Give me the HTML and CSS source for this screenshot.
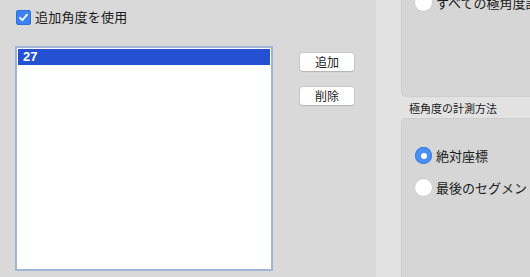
FILE: index.html
```html
<!DOCTYPE html>
<html lang="ja">
<head>
<meta charset="utf-8">
<link rel="stylesheet" href="styles.css">
</head>
<body>
<div class="page">
  <div class="left">
    <label class="check-row">
      <span class="checkbox">
        <svg width="11" height="11" viewBox="0 0 11 11"><path d="M2 5.8 L4.4 8.2 L9 2.6" fill="none" stroke="#fff" stroke-width="1.8" stroke-linecap="round" stroke-linejoin="round"/></svg>
      </span>
      <span class="check-label">追加角度を使用</span>
    </label>
    <div class="list-area">
      <div class="listbox">
        <div class="row selected">27</div>
      </div>
      <div class="buttons">
        <button class="btn">追加</button>
        <button class="btn">削除</button>
      </div>
    </div>
  </div>
  <div class="strip"></div>
  <div class="right">
    <div class="group top-group">
      <div class="radio-row">
        <span class="radio"></span>
        <span class="radio-label">すべての極角度計測</span>
      </div>
    </div>
    <div class="group-title">極角度の計測方法</div>
    <div class="group bottom-group">
      <div class="radio-row">
        <span class="radio on"><span class="dot"></span></span>
        <span class="radio-label">絶対座標</span>
      </div>
      <div class="radio-row">
        <span class="radio"></span>
        <span class="radio-label">最後のセグメントに対する相対</span>
      </div>
    </div>
  </div>
</div>
</body>
</html>
```
FILE: styles.css
```css
* { box-sizing: border-box; }
html, body {
  margin: 0;
  padding: 0;
  width: 530px;
  height: 277px;
  overflow: hidden;
  background: #d9d9d9;
  font-family: "Noto Sans CJK JP", "Noto Sans", sans-serif;
  color: #1a1a1a;
}
.page {
  display: flex;
  height: 277px;
}
.left {
  width: 376px;
  flex: none;
  background: #d9d9d9;
  padding: 9px 0 0 16px;
}
.check-row {
  display: flex;
  align-items: center;
  gap: 4px;
  height: 16px;
}
.checkbox {
  width: 15px;
  height: 15px;
  border-radius: 3px;
  background: #3d82f0;
  display: flex;
  align-items: center;
  justify-content: center;
  box-shadow: inset 0 0 0 1px #2f6fd8;
}
.check-label {
  font-size: 13px;
  line-height: 16px;
  letter-spacing: 0.2px;
}
.list-area {
  display: flex;
  margin-top: 21px;
  margin-left: -1px;
}
.listbox {
  width: 258px;
  height: 225px;
  background: #fff;
  border: 2px solid #a3b5d6;
  padding: 1px 1px;
}
.row {
  height: 16px;
  font-family: "Liberation Sans", "Noto Sans", sans-serif;
  font-size: 13px;
  line-height: 16px;
  padding-left: 5px;
}
.row.selected {
  background: #2451d3;
  color: #fff;
  font-weight: bold;
}
.buttons {
  display: flex;
  flex-direction: column;
  gap: 16px;
  margin-left: 27px;
  padding-top: 7px;
}
.btn {
  width: 54px;
  height: 18px;
  padding: 0;
  border: none;
  border-radius: 3px;
  background: #fff;
  box-shadow: 0 0 0 0.5px #b8b8b8, 0 1px 1px rgba(0,0,0,0.18);
  font-family: "Noto Sans CJK JP", sans-serif;
  font-size: 12px;
  line-height: 18px;
  color: #222;
}
.strip {
  width: 24px;
  flex: none;
  background: #e2e2e2;
}
.right {
  flex: 1;
  background: #e2e2e2;
  padding-left: 1px;
  display: flex;
  flex-direction: column;
}
.group {
  background: #d6d6d6;
  border: 1px solid #cdcdcd;
  border-right: none;
  border-radius: 5px 0 0 5px;
}
.top-group {
  margin-top: -40px;
  height: 137px;
  padding: 33px 0 0 13px;
}
.group-title {
  font-size: 11px;
  line-height: 14px;
  padding: 4px 0 3px 8px;
  height: 21px;
}
.bottom-group {
  flex: 1;
  padding: 28px 0 0 13px;
  border-bottom: none;
  border-radius: 5px 0 0 0;
}
.radio-row {
  display: flex;
  align-items: center;
  gap: 4px;
  height: 17px;
  margin-bottom: 15px;
  white-space: nowrap;
}
.radio {
  width: 17px;
  height: 17px;
  flex: none;
  border-radius: 50%;
  background: #fff;
  box-shadow: 0 0 0 0.5px #c4c4c4;
  display: flex;
  align-items: center;
  justify-content: center;
}
.radio.on {
  background: #4a8ff2;
  box-shadow: inset 0 0 0 1px #3c7ee4;
}
.dot {
  width: 6px;
  height: 6px;
  border-radius: 50%;
  background: #fff;
}
.radio-label {
  font-size: 13px;
  line-height: 17px;
}
```
